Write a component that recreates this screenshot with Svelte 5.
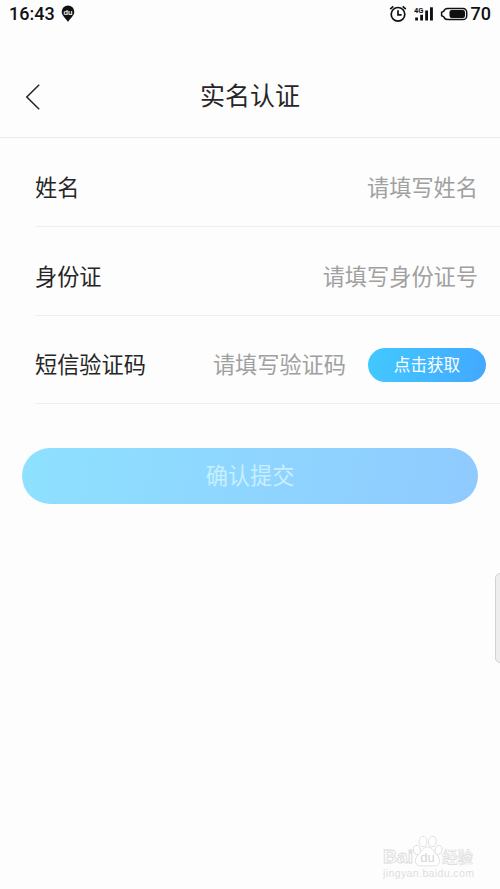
<script lang="ts">
	let name = $state("");
	let idNumber = $state("");
	let code = $state("");

	function submitForm(event: SubmitEvent): void {
		event.preventDefault();
	}
</script>

<div class="screen">
	<div class="statusBar">
		<span class="time">16:43</span>
		<svg class="pin" width="14" height="18" viewBox="0 0 14 18">
			<path
				d="M7 0.5a6.3 6.3 0 0 1 6.3 6.3c0 3.5-3.2 5.7-6.3 10.2C3.9 12.5 0.7 10.3 0.7 6.8A6.3 6.3 0 0 1 7 0.5z"
				fill="#111"
			/>
			<text x="7" y="9.8" text-anchor="middle" class="pinText">du</text>
		</svg>

		<svg class="alarm" width="18" height="18" viewBox="0 0 18 18" fill="none" stroke="#111" stroke-width="1.7">
			<circle cx="9" cy="9.3" r="6.8" />
			<path d="M9 5.3v4.5h3.6M1.2 4.2 4.3 1.4M16.8 4.2 13.7 1.4" />
		</svg>
		<svg class="signal" width="20" height="16" viewBox="0 0 20 16" fill="#111">
			<text x="0" y="6.8" class="network">4G</text>
			<rect x="1.2" y="11.5" width="2.8" height="3" />
			<rect x="6.2" y="8.8" width="2.8" height="5.7" />
			<rect x="11.2" y="4.5" width="2.8" height="10" />
			<rect x="16" y="1.3" width="2.9" height="13.2" />
		</svg>
		<svg class="battery" width="28" height="14" viewBox="0 0 28 14">
			<path
				d="M7.500 1.400H23a3.700 3.700 0 0 1 3.700 3.700v3.800a3.700 3.700 0 0 1-3.700 3.700H7.500C5 12.600 4.200 11.400 3.600 9.600L1.600 8.800V5.200l2-.8C4.200 2.600 5 1.400 7.500 1.400z"
				fill="none"
				stroke="#111"
				stroke-width="1.5"
				stroke-linejoin="round"
			/>
			<rect x="9.5" y="3" width="15.5" height="8" rx="2.2" fill="#111" />
		</svg>
		<span class="level">70</span>
	</div>

	<header>
		<button class="back" aria-label="返回">
			<svg width="16" height="28" viewBox="0 0 16 28" fill="none" stroke="#222" stroke-width="1.5">
				<path d="M14.2 1.8 1.8 14 14.2 26.2" />
			</svg>
		</button>
		<h1>实名认证</h1>
	</header>

	<form onsubmit={submitForm}>
		<div class="row">
			<label for="name">姓名</label>
			<input id="name" placeholder="请填写姓名" bind:value={name} />
		</div>
		<div class="row">
			<label for="idNumber">身份证</label>
			<input id="idNumber" placeholder="请填写身份证号" bind:value={idNumber} />
		</div>
		<div class="row codeRow">
			<label for="code">短信验证码</label>
			<input id="code" placeholder="请填写验证码" bind:value={code} />
			<button type="button" class="codeButton">点击获取</button>
		</div>
		<button type="submit" class="submitButton">确认提交</button>
	</form>

	<div class="edgeHandle"></div>

	<svg class="watermark" width="100" height="50" viewBox="0 0 100 50">
		<g fill="#fff" stroke="#dadada" stroke-width="0.8">
			<text x="2" y="29" class="brand" textLength="30" lengthAdjust="spacingAndGlyphs">Bai</text>
			<ellipse cx="36" cy="16" rx="3.4" ry="4.6" transform="rotate(-12 36 16)" />
			<ellipse cx="42" cy="7.5" rx="3.8" ry="5.3" />
			<ellipse cx="51.3" cy="7.5" rx="3.8" ry="5.3" transform="rotate(8 51.3 7.5)" />
			<ellipse cx="57.5" cy="16" rx="3.4" ry="4.8" transform="rotate(18 57.5 16)" />
			<path d="M46.5 13c4.5 0 5.5 4 9 7.5 4.5 4.5 4 10.5-1 11.2-4 .4-12 .4-16 0-5-.7-5.5-7-1-11.2 3.5-3.5 4.5-7.5 9-7.5z" />
			<text x="61" y="28.5" class="jingyan" textLength="31">经验</text>
		</g>
		<text x="46.5" y="28" text-anchor="middle" class="paw">du</text>
		<text x="2" y="42.5" class="site" textLength="91">jingyan.baidu.com</text>
	</svg>
</div>

<style>
	:global(body) {
		margin: 0;
		background: #fdfdfd;
	}

	.screen {
		position: relative;
		width: 500px;
		height: 889px;
		overflow: hidden;
		background: #fdfdfd;
		color: #262626;
		font-family: "Noto Sans CJK SC", sans-serif;
	}

	button,
	input {
		border: none;
		padding: 0;
		background: transparent;
		font-family: inherit;
	}

	.statusBar {
		display: flex;
		align-items: center;
		height: 28px;
		padding: 0 9px 0 9px;
		color: #111;
		font-family: Roboto, sans-serif;
		font-weight: 500;
		font-size: 18px;
		line-height: 28px;
	}

	.pin {
		margin-left: 6px;
	}

	.pinText {
		fill: #fff;
		font-size: 8px;
		font-weight: 500;
	}

	.alarm {
		margin-left: auto;
		margin-right: 7px;
	}

	.signal {
		margin-right: 6px;
	}

	.network {
		font-size: 7.5px;
		font-weight: 700;
	}

	.battery {
		margin-right: 3px;
	}

	header {
		display: flex;
		align-items: center;
		box-sizing: border-box;
		height: 110px;
		padding: 0 25px;
		border-bottom: 1px solid #ebebeb;
	}

	.back {
		display: flex;
		width: 40px;
		padding-top: 28px;
	}

	h1 {
		flex: 1;
		margin: 0 40px 0 0;
		padding-top: 22px;
		text-align: center;
		font-size: 25px;
		font-weight: 400;
		line-height: 36px;
	}

	form {
		display: flex;
		flex-direction: column;
	}

	.row {
		display: flex;
		align-items: center;
		box-sizing: border-box;
		height: 89px;
		margin-left: 35px;
		padding: 7px 22px 0 0;
		border-bottom: 1px solid #efefef;
		font-size: 22.2px;
	}

	.codeRow {
		height: 88px;
		padding: 6px 14px 0 0;
	}

	.row input {
		flex: 1;
		min-width: 0;
		height: 40px;
		color: #262626;
		font-size: inherit;
		text-align: right;
	}

	.row input::placeholder {
		color: #a0a0a0;
		opacity: 1;
	}

	.codeButton {
		width: 118px;
		height: 34px;
		margin: 5px 0 0 22px;
		padding-bottom: 2px;
		border-radius: 17px;
		background: linear-gradient(100deg, #42c9ff, #43a8ff);
		color: #fff;
		font-size: 16.6px;
		line-height: 32px;
	}

	.submitButton {
		height: 56px;
		margin: 44px 22px 0;
		padding-bottom: 5px;
		border-radius: 28px;
		background: linear-gradient(100deg, #8ee1ff, #8fcaff);
		color: #c8efff;
		font-size: 22.2px;
	}

	.edgeHandle {
		position: absolute;
		top: 573px;
		right: -6px;
		box-sizing: border-box;
		width: 11px;
		height: 90px;
		border: 1px solid #d2d2d2;
		border-radius: 5px;
		background: #eee;
	}

	.watermark {
		position: absolute;
		left: 381px;
		top: 834px;
		font-family: "Liberation Sans", "Noto Sans CJK SC", sans-serif;
	}

	.brand {
		font-size: 17.5px;
		font-weight: 700;
	}

	.paw {
		fill: #d4d4d4;
		stroke: none;
		font-size: 13px;
	}

	.jingyan {
		stroke-width: 0.6px;
		font-size: 15.5px;
		font-weight: 500;
	}

	.site {
		fill: #dedede;
		font-size: 10.5px;
	}
</style>
